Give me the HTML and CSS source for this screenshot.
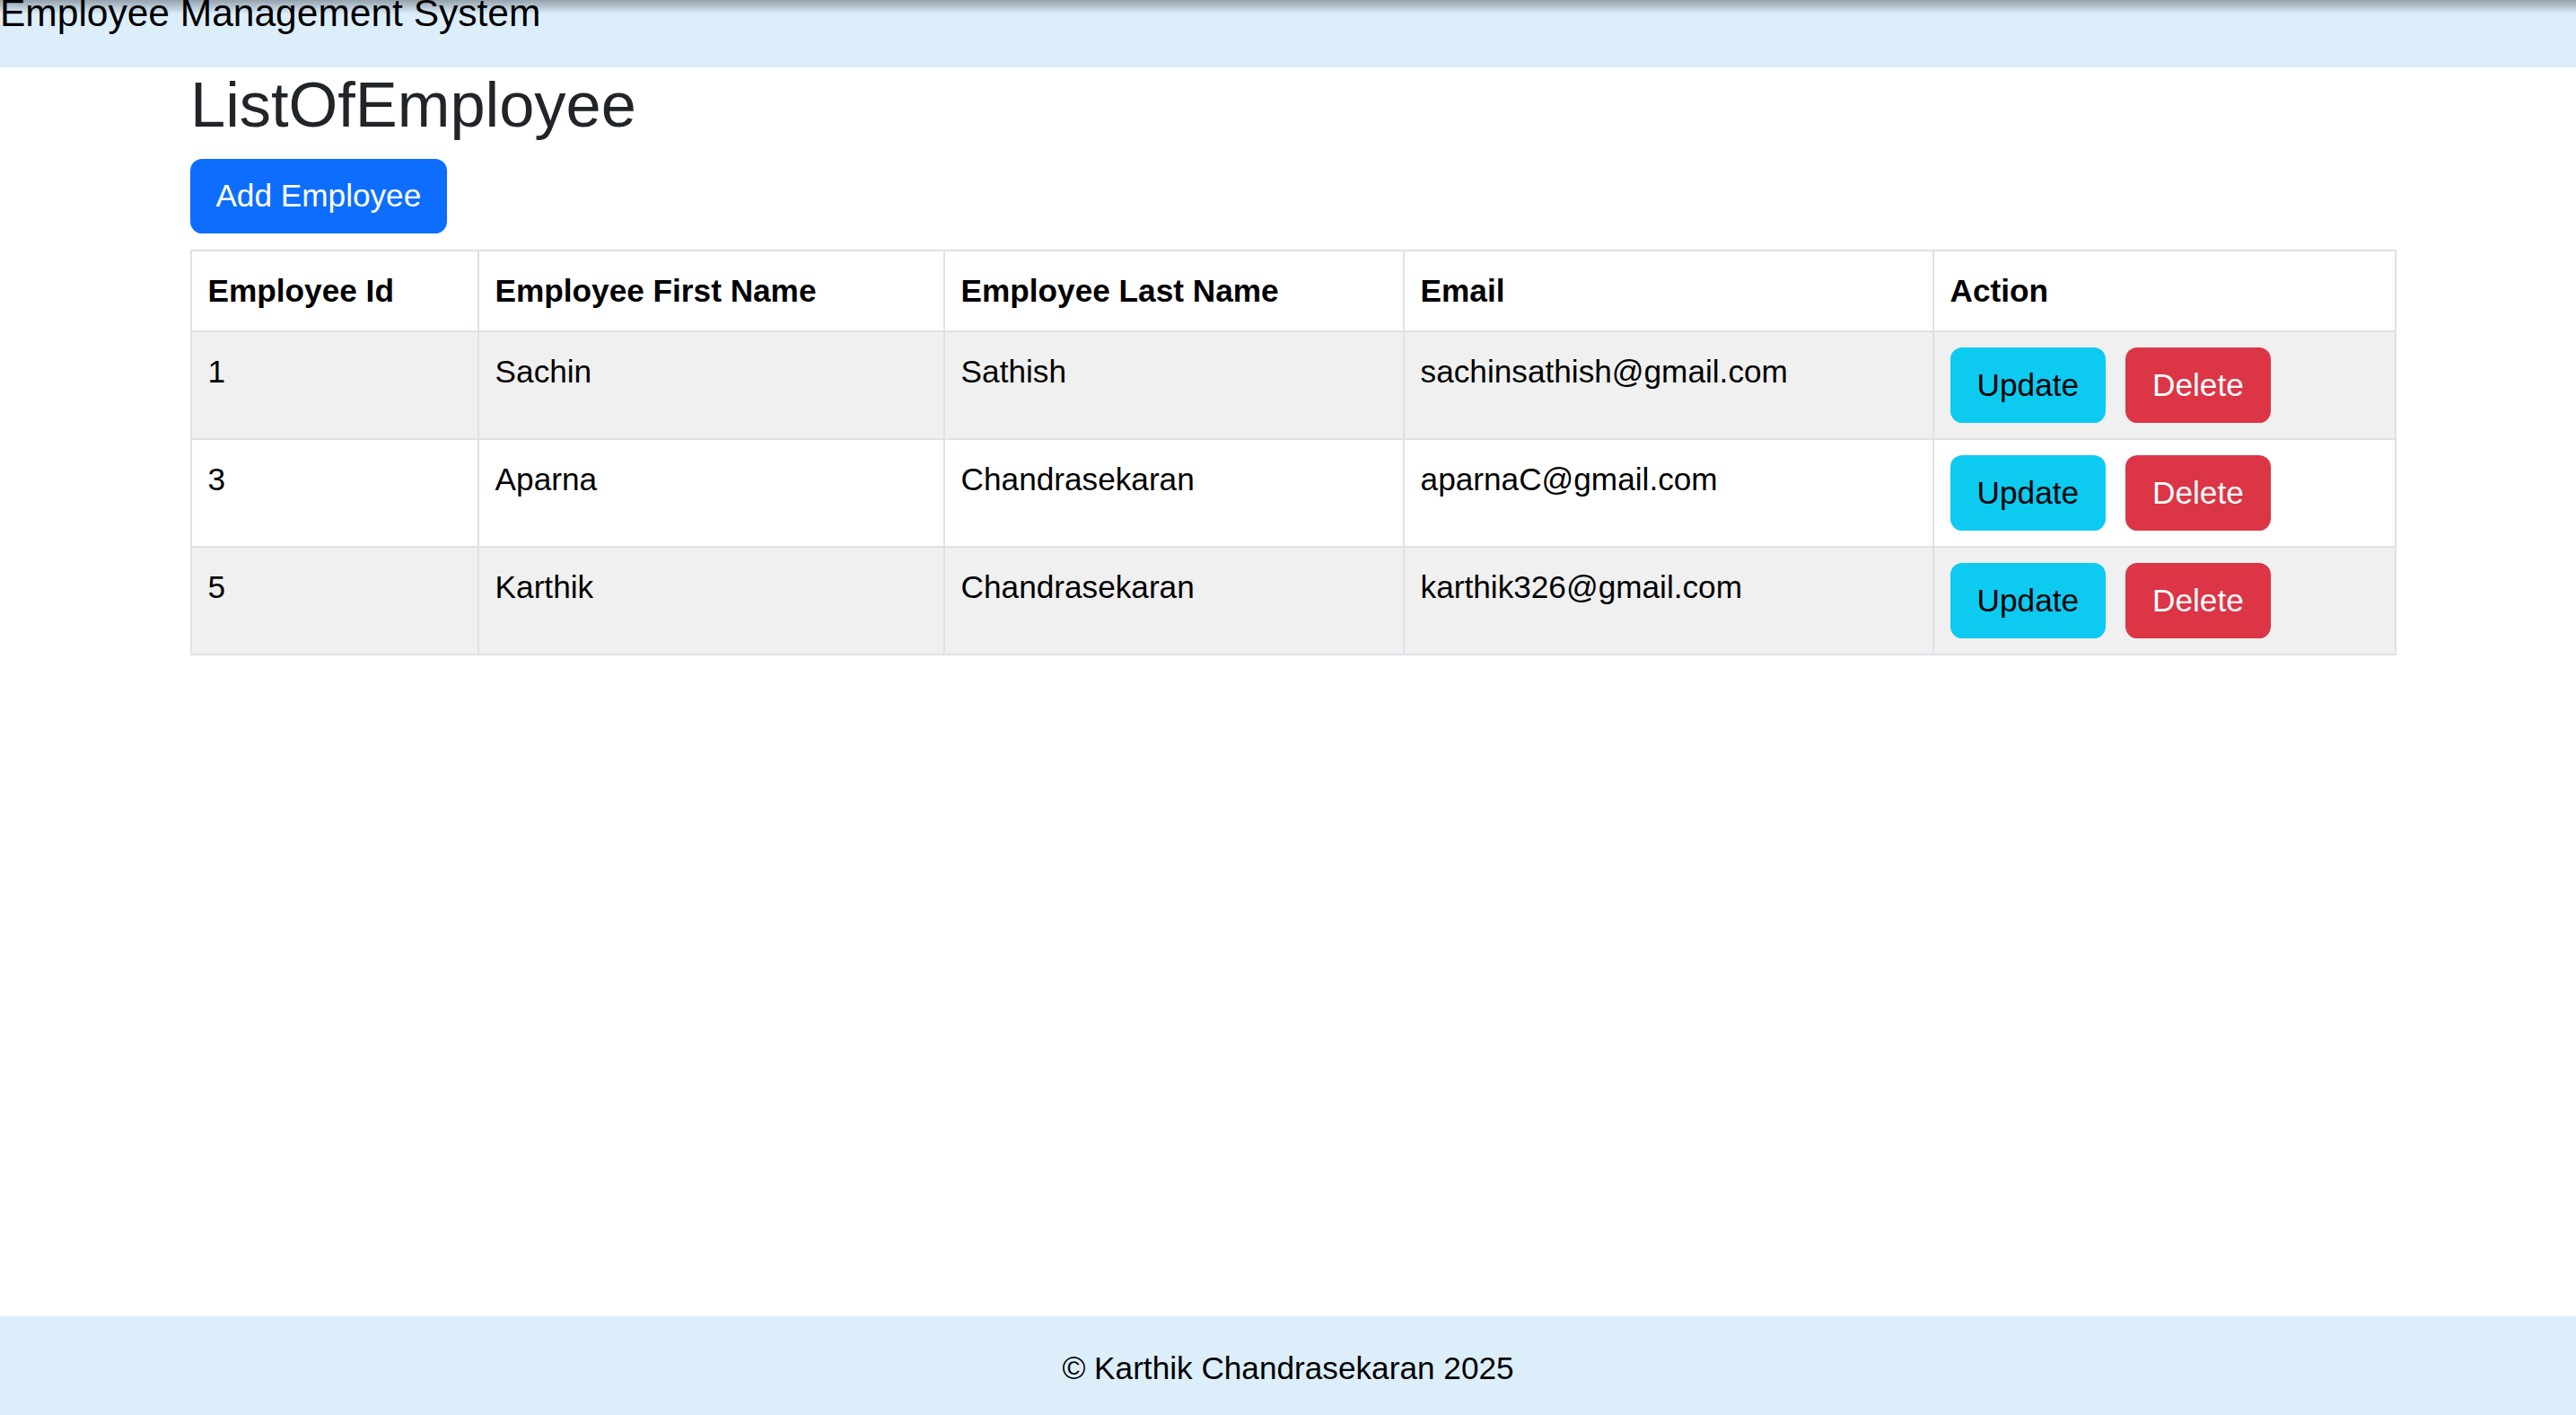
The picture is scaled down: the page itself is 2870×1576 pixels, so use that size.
FILE: index.html
```html
<!DOCTYPE html>
<html lang="en">
<head>
<meta charset="utf-8">
<title>Employee Management System</title>
<link rel="stylesheet" href="styles.css">
</head>
<body>
<div class="page">
  <header class="topbar">
    <span class="brand">Employee Management System</span>
  </header>
  <main class="container">
    <h2 class="title">ListOfEmployee</h2>
    <div class="toolbar">
      <button class="btn btn-primary">Add Employee</button>
    </div>
    <table class="table">
      <colgroup>
        <col class="c1"><col class="c2"><col class="c3"><col class="c4"><col class="c5">
      </colgroup>
      <thead>
        <tr>
          <th>Employee Id</th>
          <th>Employee First Name</th>
          <th>Employee Last Name</th>
          <th>Email</th>
          <th>Action</th>
        </tr>
      </thead>
      <tbody>
        <tr class="odd">
          <td>1</td>
          <td>Sachin</td>
          <td>Sathish</td>
          <td>sachinsathish@gmail.com</td>
          <td><div class="actions"><button class="btn btn-info">Update</button><button class="btn btn-danger">Delete</button></div></td>
        </tr>
        <tr>
          <td>3</td>
          <td>Aparna</td>
          <td>Chandrasekaran</td>
          <td>aparnaC@gmail.com</td>
          <td><div class="actions"><button class="btn btn-info">Update</button><button class="btn btn-danger">Delete</button></div></td>
        </tr>
        <tr class="odd">
          <td>5</td>
          <td>Karthik</td>
          <td>Chandrasekaran</td>
          <td>karthik326@gmail.com</td>
          <td><div class="actions"><button class="btn btn-info">Update</button><button class="btn btn-danger">Delete</button></div></td>
        </tr>
      </tbody>
    </table>
  </main>
  <footer class="footer">© Karthik Chandrasekaran 2025</footer>
</div>
</body>
</html>
```

FILE: styles.css
```css
* { box-sizing: border-box; }
html, body { margin: 0; padding: 0; }
body {
  font-family: "Liberation Sans", Arial, sans-serif;
  font-size: 35.2px;
  line-height: 1.5;
  color: #212529;
  background: #fff;
}
.page {
  min-height: 100vh;
  display: flex;
  flex-direction: column;
}
.topbar {
  height: 75px;
  background: linear-gradient(to bottom, rgba(90, 100, 110, 0.55), rgba(90, 100, 110, 0) 16px), #ddeefb;
  overflow: hidden;
}
.brand {
  display: block;
  font-size: 42.5px;
  line-height: 30px;
  color: #000;
  white-space: nowrap;
}
.container {
  flex: 1;
  width: 2456px;
  margin-left: 212px;
}
.title {
  margin: 0 0 17.6px;
  font-size: 70.4px;
  line-height: 1.2;
  font-weight: 500;
  color: #212529;
}
.toolbar { margin-bottom: 17.6px; }
.btn {
  font-family: inherit;
  font-size: 35.2px;
  line-height: 52.8px;
  padding: 13.2px 28px;
  border: 2.2px solid transparent;
  border-radius: 13.2px;
  cursor: pointer;
  display: inline-block;
}
.btn-primary { background: #0d6efd; border-color: #0d6efd; color: #fff; padding: 13.2px 26.4px; }
.btn-info { background: #0dcaf0; border-color: #0dcaf0; color: #000; }
.btn-danger { background: #dc3545; border-color: #dc3545; color: #fff; }
.table {
  width: 2456px;
  border-collapse: collapse;
  table-layout: fixed;
  color: #000;
}
.c1 { width: 320px; }
.c2 { width: 519px; }
.c3 { width: 512px; }
.c4 { width: 590px; }
.c5 { width: 515px; }
.table th, .table td {
  border: 2px solid #dee2e6;
  padding: 18px 17.6px 17.2px;
  text-align: left;
  vertical-align: top;
}
.table th { font-weight: 700; }
.table tr.odd td { background: #f0f0f0; }
.actions {
  display: flex;
  gap: 22px;
  margin-top: -0.4px;
}
.footer {
  height: 110px;
  padding-top: 6px;
  background: #ddeefb;
  color: #000;
  display: flex;
  align-items: center;
  justify-content: center;
}
```
